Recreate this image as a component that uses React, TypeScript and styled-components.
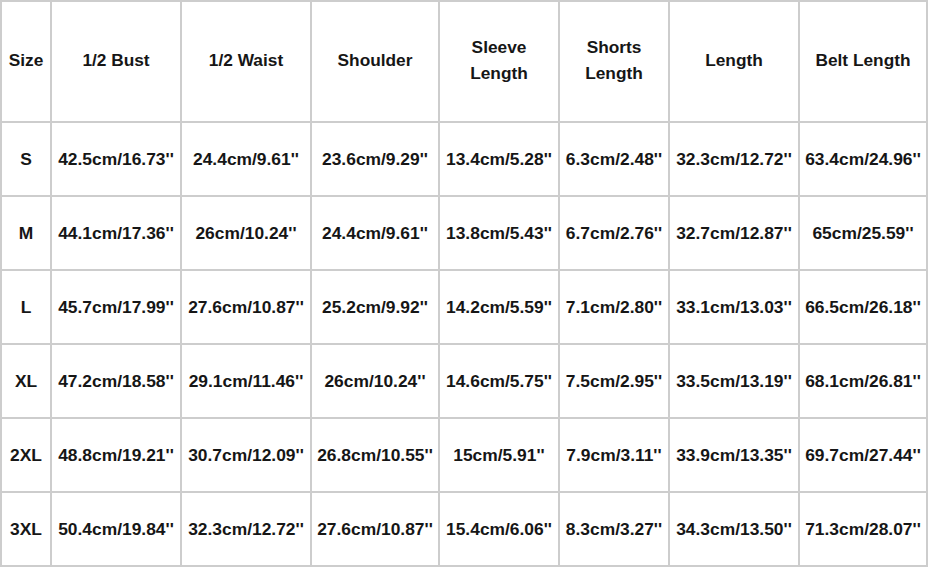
import React from "react";
import styled, { createGlobalStyle } from "styled-components";

const GlobalStyle = createGlobalStyle`
  html, body {
    margin: 0;
    padding: 0;
    background: #ffffff;
  }
  body {
    font-family: "Liberation Sans", Arial, sans-serif;
  }
`;

const Grid = styled.div`
  display: grid;
  grid-template-columns: 48px 128px 128px 126px 118px 108px 128px 126px;
  grid-template-rows: 119px repeat(6, 72px);
  gap: 2px;
  padding: 2px;
  background: #cdcdcd;
  width: max-content;
`;

const Cell = styled.div<{ $head?: boolean }>`
  background: #ffffff;
  display: flex;
  align-items: center;
  justify-content: center;
  text-align: center;
  color: #161616;
  font-family: "Liberation Sans", Arial, sans-serif;
  font-weight: 700;
  font-size: ${(p) => (p.$head ? "17.3px" : "17.4px")};
  line-height: ${(p) => (p.$head ? "26px" : "20px")};
  white-space: nowrap;
  padding-bottom: ${(p) => (p.$head ? "4px" : "0")};
`;

const headers: React.ReactNode[] = [
  "Size",
  "1/2 Bust",
  "1/2 Waist",
  "Shoulder",
  <>Sleeve<br />Length</>,
  <>Shorts<br />Length</>,
  "Length",
  "Belt Length",
];

const rows: string[][] = [
  ["S", "42.5cm/16.73''", "24.4cm/9.61''", "23.6cm/9.29''", "13.4cm/5.28''", "6.3cm/2.48''", "32.3cm/12.72''", "63.4cm/24.96''"],
  ["M", "44.1cm/17.36''", "26cm/10.24''", "24.4cm/9.61''", "13.8cm/5.43''", "6.7cm/2.76''", "32.7cm/12.87''", "65cm/25.59''"],
  ["L", "45.7cm/17.99''", "27.6cm/10.87''", "25.2cm/9.92''", "14.2cm/5.59''", "7.1cm/2.80''", "33.1cm/13.03''", "66.5cm/26.18''"],
  ["XL", "47.2cm/18.58''", "29.1cm/11.46''", "26cm/10.24''", "14.6cm/5.75''", "7.5cm/2.95''", "33.5cm/13.19''", "68.1cm/26.81''"],
  ["2XL", "48.8cm/19.21''", "30.7cm/12.09''", "26.8cm/10.55''", "15cm/5.91''", "7.9cm/3.11''", "33.9cm/13.35''", "69.7cm/27.44''"],
  ["3XL", "50.4cm/19.84''", "32.3cm/12.72''", "27.6cm/10.87''", "15.4cm/6.06''", "8.3cm/3.27''", "34.3cm/13.50''", "71.3cm/28.07''"],
];

export default function App() {
  return (
    <>
      <GlobalStyle />
      <Grid>
        {headers.map((h, i) => (
          <Cell key={`h${i}`} $head>
            <span>{h}</span>
          </Cell>
        ))}
        {rows.map((r, ri) =>
          r.map((c, ci) => <Cell key={`${ri}-${ci}`}>{c}</Cell>)
        )}
      </Grid>
    </>
  );
}
